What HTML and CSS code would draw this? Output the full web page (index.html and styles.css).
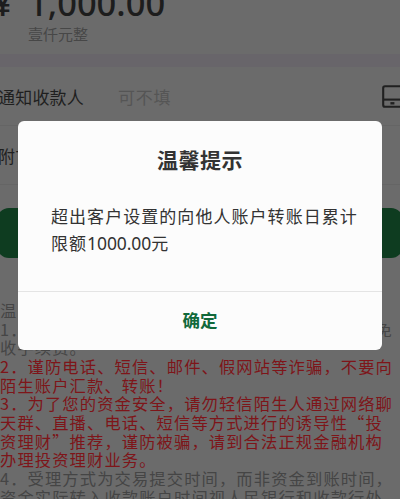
FILE: index.html
```html
<!DOCTYPE html>
<html lang="zh-CN">
<head>
<meta charset="utf-8">
<title>转账汇款</title>
<link rel="stylesheet" href="styles.css">
</head>
<body>
<main class="page">
  <section class="amount">
    <div class="sum"><span class="yen">¥</span><span>1,000.00</span></div>
    <div class="words">壹仟元整</div>
  </section>
  <section class="form">
    <div class="row notify">
      <span class="label">通知收款人</span>
      <span class="hint">可不填</span>
      <svg class="contacts" viewBox="0 0 24 24" fill="none" stroke="#202020" stroke-width="2.1">
        <rect x="1.2" y="1.3" width="20" height="20.4" rx="1.8"/>
        <path d="M1 14.6h20"/>
        <path d="M8.4 18.3h4" stroke-width="2.4"/>
      </svg>
    </div>
    <div class="row remark"><span class="label">附言</span></div>
  </section>
  <div class="submit"></div>
  <section class="notice">
    <p>温馨提示：</p>
    <p>1．个人客户通过手机银行办理境内人民币转账，免</p>
    <p>收手续费。</p>
    <p class="warn">2．谨防电话、短信、邮件、假网站等诈骗，不要向</p>
    <p class="warn">陌生账户汇款、转账！</p>
    <p class="warn">3．为了您的资金安全，请勿轻信陌生人通过网络聊</p>
    <p class="warn">天群、直播、电话、短信等方式进行的诱导性“投</p>
    <p class="warn">资理财”推荐，谨防被骗，请到合法正规金融机构</p>
    <p class="warn">办理投资理财业务。</p>
    <p>4．受理方式为交易提交时间，而非资金到账时间，</p>
    <p>资金实际转入收款账户时间视人民银行和收款行处</p>
  </section>
</main>
<div class="dialog" role="dialog">
  <h1>温馨提示</h1>
  <div class="message">超出客户设置的向他人账户转账日累计<br>限额<span class="num">1000.00</span>元</div>
  <button class="confirm">确定</button>
</div>
</body>
</html>
```
FILE: styles.css
```css
* { box-sizing: border-box; }
body {
  margin: 0;
  height: 499px;
  overflow: hidden;
  background: #6b6b6b;
  font-family: "Noto Sans CJK SC", sans-serif;
  color: #222;
}
.page { height: 499px; overflow: hidden; white-space: nowrap; }
.amount { height: 67px; border-bottom: 13px solid #68656a; }
.sum {
  display: flex;
  height: 24px;
  margin-left: -7px;
  font: 500 34.5px/40px "Noto Sans", sans-serif;
  color: #1d1d1d;
  align-items: flex-end;
}
.sum span { height: 41px; }
.sum .yen { width: 35px; font-size: 34px; }
.words { margin-left: 28px; font-size: 15px; line-height: 20px; color: #474747; }
.row { display: flex; align-items: center; height: 59px; border-bottom: 1px solid #656565; }
.label { font-size: 17px; letter-spacing: .2px; margin-left: -2px; color: #1f1f1f; }
.notify .label { width: 120px; }
.hint { font-size: 17px; letter-spacing: .8px; color: #555; }
.contacts { width: 24px; height: 24px; margin: 2px -6px 0 auto; flex: none; }
.submit { height: 50px; margin: 23px -3px 0; border-radius: 12px; background: #0e3c20; }
.notice { margin-top: 43px; color: #454545; font-size: 16.3px; line-height: 18.65px; letter-spacing: 1.12px; }
.notice p { margin: 0; }
.notice .warn { color: #7e1519; }
.dialog {
  position: absolute;
  left: 18px;
  top: 121px;
  width: 364px;
  height: 229px;
  display: flex;
  flex-direction: column;
  border-radius: 6px;
  background: #fcfcfc;
  overflow: hidden;
  white-space: nowrap;
}
.dialog h1 { margin: 23px 0 0; font-size: 21px; line-height: 30px; letter-spacing: .5px; text-align: center; color: #333; }
.message { margin: 28px 0 0 33px; font-size: 17px; line-height: 27px; letter-spacing: 1.05px; color: #333; }
.num { font-family: "Noto Sans", sans-serif; font-size: 17.5px; line-height: 1; letter-spacing: -.1px; }
.confirm {
  height: 59px;
  margin-top: auto;
  padding: 0;
  border: 0;
  border-top: 1px solid #e4e4e4;
  background: none;
  font: bold 17.5px/54px "Noto Sans CJK SC", sans-serif;
  color: #11693b;
}
.confirm { padding-bottom: 2px; }
```
